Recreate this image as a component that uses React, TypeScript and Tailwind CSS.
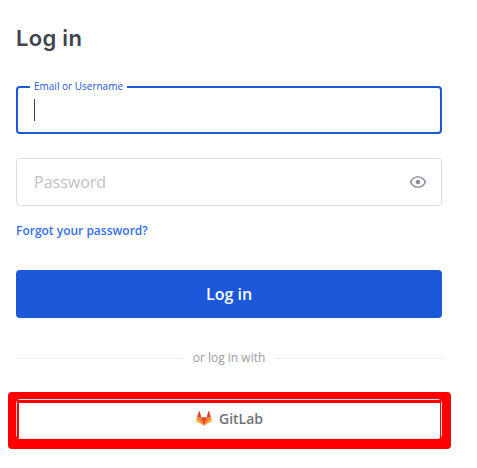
import { useState } from 'react';

function EyeIcon() {
  return (
    <svg width="18" height="18" viewBox="0 0 24 24" fill="#8b8f9a">
      <path d="M12 9a3 3 0 0 1 0 6 3 3 0 0 1 0-6m0-4.8c5 0 9.27 3.2 11 7.8-1.73 4.6-6 7.8-11 7.8S2.73 16.6 1 12c1.73-4.6 6-7.8 11-7.8M3.2 12c1.6 3.6 4.9 6 8.8 6s7.2-2.4 8.8-6c-1.6-3.6-4.9-6-8.8-6s-7.2 2.4-8.8 6z" />
    </svg>
  );
}

function GitLabIcon() {
  return (
    <svg className="mb-0.5" width="16" height="15" viewBox="0 0 36 34" preserveAspectRatio="none">
      <path fill="#e24329" d="M2.2 14L6.56.64a.85.85 0 0 1 1.61 0L12 14z" />
      <path fill="#e24329" d="M33.8 14L29.44.64a.85.85 0 0 0-1.61 0L24 14z" />
      <path fill="#fc6d26" d="M18 33.5L11.7 14H2.2z" />
      <path fill="#fc6d26" d="M18 33.5L24.3 14h9.5z" />
      <path fill="#fca326" d="M2.2 14L.1 20.4a1.5 1.5 0 0 0 .5 1.6L18 34z" />
      <path fill="#fca326" d="M33.8 14l2.1 6.4a1.5 1.5 0 0 1-.5 1.6L18 34z" />
      <path fill="#e24329" d="M18 33.5L24.3 14H11.7z" />
    </svg>
  );
}

export default function App() {
  const [showPassword, setShowPassword] = useState(false);

  return (
    <main className="h-[468px] w-[477px] overflow-hidden bg-white pt-[23px] pl-4 font-['Open_Sans',sans-serif]">
      <form className="w-[426px]" onSubmit={(e) => e.preventDefault()}>
        <h1 className="h-[30px] font-['Inter',sans-serif] text-[22px] leading-[30px] font-semibold tracking-[0.3px] text-[#3f4350]">
          Log in
        </h1>

        {/* Email, focused with floating label */}
        <div className="relative mt-[33px] flex h-12 items-center rounded border-2 border-[#1c58d9] px-4">
          <label className="absolute top-[-9px] left-3 bg-white px-1 text-[10px] leading-[14px] text-[#1c58d9]">
            Email or Username
          </label>
          <span className="h-[22px] w-px bg-[#3f4350]" />
        </div>

        {/* Password */}
        <div className="mt-6 flex h-12 items-center justify-between rounded border border-[#dddddf] pr-3.5 pl-[17px]">
          <span className="text-base leading-6 text-[#c0c2c7]">Password</span>
          <button type="button" aria-label="Show password" onClick={() => setShowPassword(!showPassword)}>
            <EyeIcon />
          </button>
        </div>

        <a href="#" className="mt-4 block h-4 text-xs leading-[17px] font-semibold text-[#386fe5]">
          Forgot your password?
        </a>

        <button type="submit" className="mt-8 block h-12 w-full rounded bg-[#1c58d9] text-base font-semibold text-white">
          Log in
        </button>

        {/* Divider */}
        <div className="mt-8 flex h-4 items-center">
          <div className="h-px flex-1 bg-[#ececed]" />
          <span className="px-2.5 text-xs text-[#9a9ca3]">or log in with</span>
          <div className="h-px flex-1 bg-[#ececed]" />
        </div>

        {/* Highlighted external login */}
        <div className="mt-[26px] -ml-2 h-[57px] w-[443px] rounded bg-[#ff0000] pt-[7px] pr-[9px] pb-2.5 pl-2">
          <button type="button" className="block h-10 w-full rounded-sm border border-[#dde3ea]">
            <span className="flex h-full items-center justify-center gap-[7px] border-t-[3px] border-r border-l-2 border-[#ff0000] bg-white pb-[3px] text-sm font-semibold text-[#6f727c]">
              <GitLabIcon />
              GitLab
            </span>
          </button>
        </div>
      </form>
    </main>
  );
}
